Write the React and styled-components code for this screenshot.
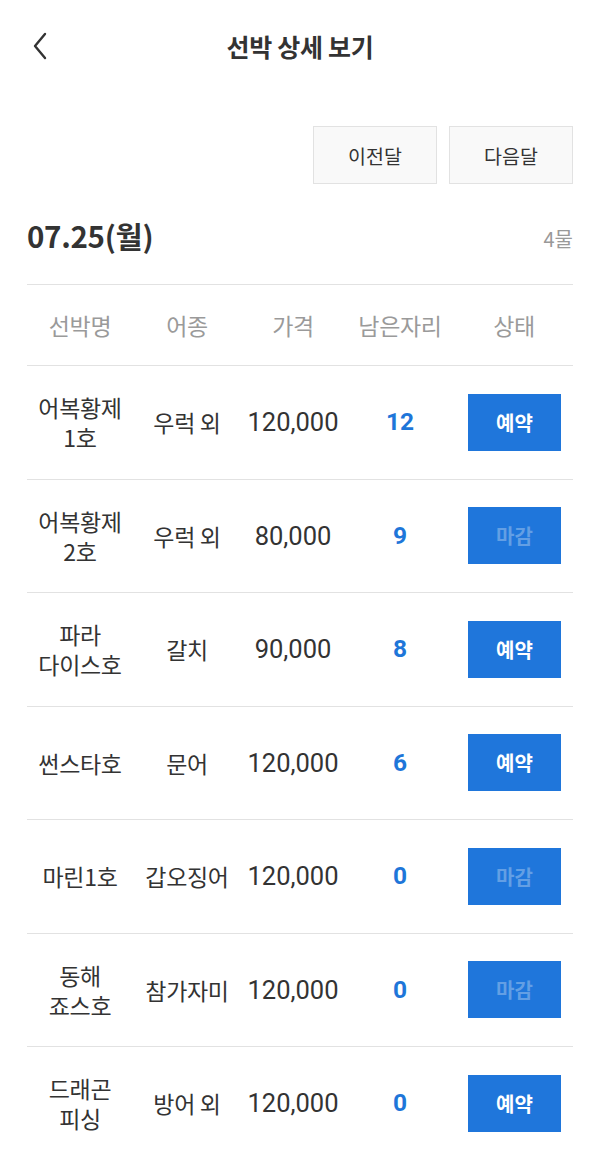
import React from "react";
import styled, { createGlobalStyle } from "styled-components";

const Global = createGlobalStyle`
  * { box-sizing: border-box; }
  html, body { margin: 0; padding: 0; background: #fff; }
  body { font-family: "Noto Sans CJK KR", "Noto Sans", Roboto, sans-serif; color: #333; }
`;

const Page = styled.div`
  width: 600px;
  background: #fff;
`;

const Header = styled.header`
  position: relative;
  height: 92px;
  display: flex;
  align-items: center;
  justify-content: center;
`;

const BackButton = styled.button`
  position: absolute;
  left: 24px;
  top: 28px;
  width: 32px;
  height: 36px;
  border: 0;
  background: none;
  padding: 0;
  display: flex;
  align-items: center;
  justify-content: center;
`;

const Title = styled.h1`
  margin: 0;
  margin-top: -1px;
  font-size: 25px;
  font-weight: 700;
  color: #333;
  letter-spacing: -0.3px;
`;

const Content = styled.div`
  padding: 0 27px;
`;

const MonthNav = styled.div`
  display: flex;
  justify-content: flex-end;
  gap: 12px;
  padding-top: 34px;
`;

const NavButton = styled.button`
  width: 124px;
  height: 58px;
  border: 1px solid #e2e2e2;
  background: #f9f9f9;
  font-family: inherit;
  font-size: 19.5px;
  color: #333;
  padding: 0;
`;

const DateRow = styled.div`
  display: flex;
  justify-content: space-between;
  align-items: center;
  height: 100px;
  padding-top: 2px;
`;

const DateText = styled.div`
  font-size: 29.5px;
  font-weight: 700;
  color: #333;
  letter-spacing: -0.3px;
`;

const Tide = styled.div`
  font-size: 20px;
  color: #999;
  margin-top: 6px;
`;

const Table = styled.div`
  border-top: 1px solid #e2e2e2;
`;

const Row = styled.div`
  display: grid;
  grid-template-columns: 106px 108px 104px 110px 118px;
  align-items: center;
  height: ${(p) => (p.$head ? "81px" : "113.5px")};
  border-bottom: 1px solid #e2e2e2;
`;

const Cell = styled.div`
  text-align: center;
  font-size: 23px;
  line-height: 30px;
  color: ${(p) => (p.$head ? "#9a9a9a" : "#333")};
  white-space: pre-line;
  display: flex;
  justify-content: center;
  letter-spacing: -0.3px;
`;

const Seats = styled(Cell)`
  color: #1e76d9;
  font-weight: 700;
  font-family: Roboto, "Noto Sans CJK KR", sans-serif;
  font-size: 24.5px;
  letter-spacing: 0;
`;

const Price = styled(Cell)`
  font-family: Roboto, "Noto Sans CJK KR", sans-serif;
  font-size: 25.5px;
  letter-spacing: 0;
`;

const StatusButton = styled.button`
  width: 93px;
  height: 57px;
  border: 0;
  background: #1f76db;
  color: ${(p) => (p.$closed ? "#639fe4" : "#fff")};
  font-family: inherit;
  font-size: 20px;
  font-weight: 700;
  padding: 0;
  margin-left: 1px;
`;

const rows = [
  { name: "어복황제\n1호", fish: "우럭 외", price: "120,000", seats: 12, open: true },
  { name: "어복황제\n2호", fish: "우럭 외", price: "80,000", seats: 9, open: false },
  { name: "파라\n다이스호", fish: "갈치", price: "90,000", seats: 8, open: true },
  { name: "썬스타호", fish: "문어", price: "120,000", seats: 6, open: true },
  { name: "마린1호", fish: "갑오징어", price: "120,000", seats: 0, open: false },
  { name: "동해\n죠스호", fish: "참가자미", price: "120,000", seats: 0, open: false },
  { name: "드래곤\n피싱", fish: "방어 외", price: "120,000", seats: 0, open: true },
];

export default function App() {
  return (
    <Page>
      <Global />
      <Header>
        <BackButton aria-label="back">
          <svg width="16" height="28" viewBox="0 0 16 28" fill="none">
            <path d="M13 2 L3 14 L13 26" stroke="#333" strokeWidth="2.4" strokeLinecap="round" strokeLinejoin="round" />
          </svg>
        </BackButton>
        <Title>선박 상세 보기</Title>
      </Header>
      <Content>
        <MonthNav>
          <NavButton>이전달</NavButton>
          <NavButton>다음달</NavButton>
        </MonthNav>
        <DateRow>
          <DateText>07.25(월)</DateText>
          <Tide>4물</Tide>
        </DateRow>
        <Table>
          <Row $head>
            <Cell $head>선박명</Cell>
            <Cell $head>어종</Cell>
            <Cell $head>가격</Cell>
            <Cell $head>남은자리</Cell>
            <Cell $head>상태</Cell>
          </Row>
          {rows.map((r, i) => (
            <Row key={i}>
              <Cell>{r.name}</Cell>
              <Cell>{r.fish}</Cell>
              <Price>{r.price}</Price>
              <Seats>{r.seats}</Seats>
              <Cell>
                <StatusButton $closed={!r.open}>{r.open ? "예약" : "마감"}</StatusButton>
              </Cell>
            </Row>
          ))}
        </Table>
      </Content>
    </Page>
  );
}
